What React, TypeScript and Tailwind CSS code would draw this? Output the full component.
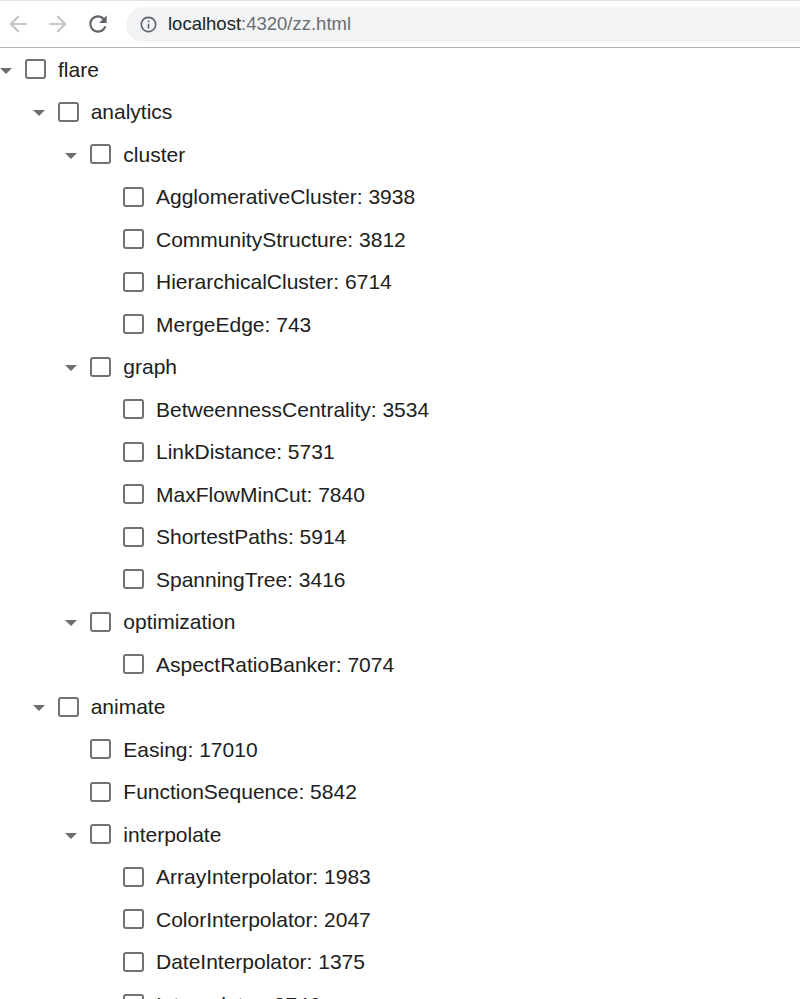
import { ReactNode } from 'react'

interface TreeNode {
  name: string
  size?: number
  children?: TreeNode[]
}

const tree: TreeNode = {
  name: 'flare',
  children: [
    {
      name: 'analytics',
      children: [
        {
          name: 'cluster',
          children: [
            { name: 'AgglomerativeCluster', size: 3938 },
            { name: 'CommunityStructure', size: 3812 },
            { name: 'HierarchicalCluster', size: 6714 },
            { name: 'MergeEdge', size: 743 },
          ],
        },
        {
          name: 'graph',
          children: [
            { name: 'BetweennessCentrality', size: 3534 },
            { name: 'LinkDistance', size: 5731 },
            { name: 'MaxFlowMinCut', size: 7840 },
            { name: 'ShortestPaths', size: 5914 },
            { name: 'SpanningTree', size: 3416 },
          ],
        },
        {
          name: 'optimization',
          children: [{ name: 'AspectRatioBanker', size: 7074 }],
        },
      ],
    },
    {
      name: 'animate',
      children: [
        { name: 'Easing', size: 17010 },
        { name: 'FunctionSequence', size: 5842 },
        {
          name: 'interpolate',
          children: [
            { name: 'ArrayInterpolator', size: 1983 },
            { name: 'ColorInterpolator', size: 2047 },
            { name: 'DateInterpolator', size: 1375 },
            { name: 'Interpolator', size: 8746 },
            { name: 'MatrixInterpolator', size: 2202 },
            { name: 'NumberInterpolator', size: 1382 },
          ],
        },
      ],
    },
  ],
}

function Icon({ d, className }: { d: string; className?: string }) {
  return (
    <svg viewBox="0 0 24 24" className={className} fill="currentColor">
      <path d={d} />
    </svg>
  )
}

function BrowserBar() {
  return (
    <div className="flex h-[48px] items-center border-t border-b border-t-[#dee1e6] border-b-[#b4b4b4] bg-white pl-[5px]">
      <Icon className="w-[26px] h-[26px] text-[#c4c6c9]" d="M20 11H7.83l5.59-5.59L12 4l-8 8 8 8 1.41-1.41L7.83 13H20v-2z" />
      <Icon className="ml-[14px] w-[26px] h-[26px] text-[#c4c6c9]" d="M4 11h12.17l-5.59-5.59L12 4l8 8-8 8-1.41-1.41L16.17 13H4v-2z" />
      <Icon className="ml-[14px] w-[26px] h-[26px] text-[#5f6368]" d="M17.65 6.35C16.2 4.9 14.21 4 12 4c-4.42 0-7.990 3.58-7.99 8s3.57 8 7.99 8c3.73 0 6.84-2.55 7.73-6h-2.08c-.82 2.33-3.04 4-5.65 4-3.31 0-6-2.69-6-6s2.69-6 6-6c1.66 0 3.14.69 4.22 1.78L13 11h7V4l-2.35 2.35z" />
      <div className="ml-[15px] flex h-[35px] flex-1 items-center rounded-l-full bg-[#f1f3f4] pl-[13px]">
        <Icon className="w-[19px] h-[19px] text-[#5f6368]" d="M11 7h2v2h-2zm0 4h2v6h-2zm1-9C6.48 2 2 6.480 2 12s4.48 10 10 10 10-4.48 10-10S17.52 2 12 2zm0 18c-4.41 0-8-3.59-8-8s3.59-8 8-8 8 3.59 8 8-3.59 8-8 8z" />
        <span className="ml-[10px] text-[18.5px] font-['Liberation_Sans',Arial,sans-serif] leading-none">
          <span className="text-[#202124]">localhost</span>
          <span className="text-[#6b6e72]">:4320/zz.html</span>
        </span>
      </div>
    </div>
  )
}

function Row({ caret, label }: { caret: boolean; label: ReactNode }) {
  return (
    <div className="flex h-[42.5px] items-center">
      <div className="flex w-[25px] shrink-0 items-center pt-[3px]">
        {caret && (
          <div className="h-0 w-0 border-x-[6px] border-t-[6px] border-x-transparent border-t-[#6e6e6e]" />
        )}
      </div>
      <div className="h-[20px] w-[21px] shrink-0 rounded-[3px] border-2 border-[#727272] bg-white" />
      <span className="ml-[12px] whitespace-nowrap text-[21px] text-[#202020]">{label}</span>
    </div>
  )
}

function Branch({ node }: { node: TreeNode }) {
  if (!node.children) {
    return <Row caret={false} label={`${node.name}: ${node.size}`} />
  }
  return (
    <div>
      <Row caret label={node.name} />
      <div className="pl-[32.67px]">
        {node.children.map((c) => (
          <Branch key={c.name} node={c} />
        ))}
      </div>
    </div>
  )
}

export default function App() {
  return (
    <div className="min-h-screen bg-white font-['Liberation_Sans',Arial,sans-serif]">
      <BrowserBar />
      <Branch node={tree} />
    </div>
  )
}
